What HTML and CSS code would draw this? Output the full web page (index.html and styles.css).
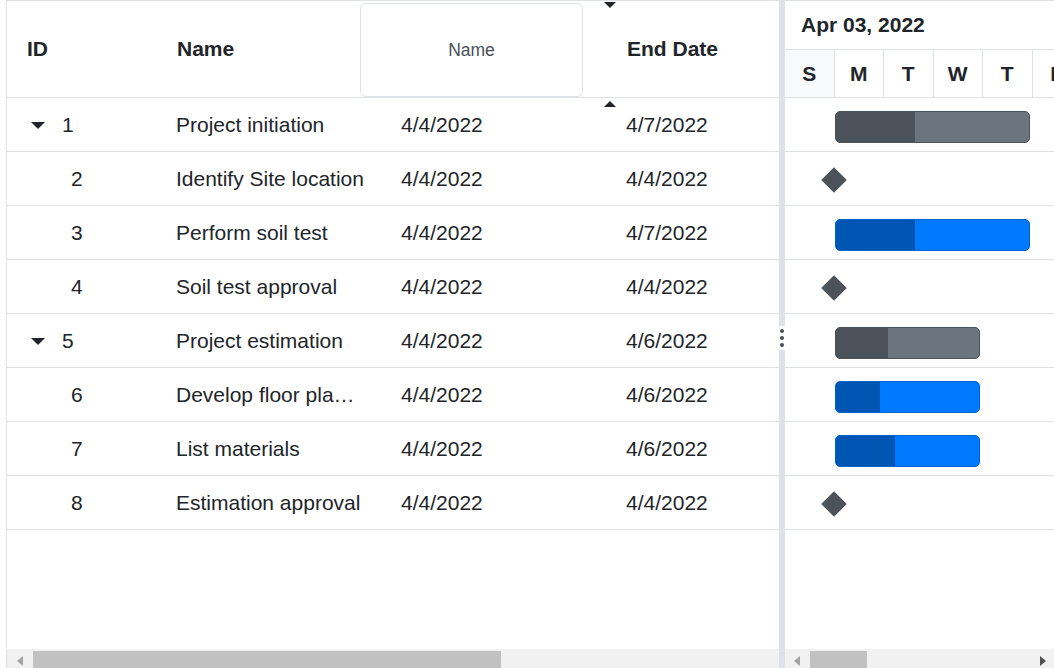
FILE: index.html
```html
<!DOCTYPE html>
<html lang="en">
<head>
<meta charset="utf-8">
<title>Gantt</title>
<link rel="stylesheet" href="styles.css">
</head>
<body>
<div class="gantt">
  <div class="grid-pane">
    <div class="grid-header">
      <div class="hcell c-id">ID</div>
      <div class="hcell c-name">Name</div>
      <div class="hcell c-start"></div>
      <div class="hcell c-end">End Date</div>
      <div class="drag-clone">Name</div>
      <span class="drop-arrow down"></span>
      <span class="drop-arrow up"></span>
    </div>
    <div class="grid-body">
      <div class="row"><div class="cell c-id"><span class="expander"></span>1</div><div class="cell c-name">Project initiation</div><div class="cell c-start">4/4/2022</div><div class="cell c-end">4/7/2022</div></div>
      <div class="row"><div class="cell c-id"><span class="indent"></span>2</div><div class="cell c-name">Identify Site location</div><div class="cell c-start">4/4/2022</div><div class="cell c-end">4/4/2022</div></div>
      <div class="row"><div class="cell c-id"><span class="indent"></span>3</div><div class="cell c-name">Perform soil test</div><div class="cell c-start">4/4/2022</div><div class="cell c-end">4/7/2022</div></div>
      <div class="row"><div class="cell c-id"><span class="indent"></span>4</div><div class="cell c-name">Soil test approval</div><div class="cell c-start">4/4/2022</div><div class="cell c-end">4/4/2022</div></div>
      <div class="row"><div class="cell c-id"><span class="expander"></span>5</div><div class="cell c-name">Project estimation</div><div class="cell c-start">4/4/2022</div><div class="cell c-end">4/6/2022</div></div>
      <div class="row"><div class="cell c-id"><span class="indent"></span>6</div><div class="cell c-name">Develop floor plan for estimation</div><div class="cell c-start">4/4/2022</div><div class="cell c-end">4/6/2022</div></div>
      <div class="row"><div class="cell c-id"><span class="indent"></span>7</div><div class="cell c-name">List materials</div><div class="cell c-start">4/4/2022</div><div class="cell c-end">4/6/2022</div></div>
      <div class="row"><div class="cell c-id"><span class="indent"></span>8</div><div class="cell c-name">Estimation approval</div><div class="cell c-start">4/4/2022</div><div class="cell c-end">4/4/2022</div></div>
      <div class="filler"></div>
    </div>
    <div class="hscroll left-scroll">
      <span class="sb-arrow sb-left"></span>
      <span class="sb-thumb"></span>
    </div>
  </div>
  <div class="splitter">
    <div class="handle"><i></i><i></i><i></i></div>
  </div>
  <div class="chart-pane">
    <div class="tl-top">Apr 03, 2022</div>
    <div class="tl-days">
      <div class="day weekend">S</div>
      <div class="day">M</div>
      <div class="day">T</div>
      <div class="day">W</div>
      <div class="day">T</div>
      <div class="day">F</div>
    </div>
    <div class="chart-body">
      <div class="crow bar-row"><div class="bar parent" style="width:195px"><div class="progress" style="width:79px"></div></div></div>
      <div class="crow ms-row"><div class="milestone"></div></div>
      <div class="crow bar-row"><div class="bar child" style="width:195px"><div class="progress" style="width:79px"></div></div></div>
      <div class="crow ms-row"><div class="milestone"></div></div>
      <div class="crow bar-row"><div class="bar parent" style="width:145px"><div class="progress" style="width:52px"></div></div></div>
      <div class="crow bar-row"><div class="bar child" style="width:145px"><div class="progress" style="width:44px"></div></div></div>
      <div class="crow bar-row"><div class="bar child" style="width:145px"><div class="progress" style="width:59px"></div></div></div>
      <div class="crow ms-row"><div class="milestone"></div></div>
      <div class="filler"></div>
    </div>
    <div class="hscroll right-scroll">
      <span class="sb-arrow sb-left"></span>
      <span class="sb-thumb"></span>
      <span class="sb-arrow sb-right"></span>
    </div>
  </div>
</div>
</body>
</html>
```

FILE: styles.css
```css
html, body {
  margin: 0;
  padding: 0;
  height: 668px;
  overflow: hidden;
  background: #fff;
}

body {
  font-family: "Liberation Sans", Arial, sans-serif;
  color: #212529;
  font-size: 21px;
}

.gantt {
  margin-left: 6px;
  width: 1048px;
  height: 675px;
  box-sizing: border-box;
  border-top: 1px solid #dee2e6;
  border-left: 1px solid #dee2e6;
  display: flex;
  overflow: hidden;
}

/* ---------- grid pane ---------- */
.grid-pane {
  width: 772px;
  flex: none;
  display: flex;
  flex-direction: column;
  position: relative;
  overflow: hidden;
}

.grid-header {
  height: 97px;
  box-sizing: border-box;
  border-bottom: 1px solid #dee2e6;
  display: flex;
  flex: none;
}

.hcell {
  display: flex;
  align-items: center;
  padding-left: 20px;
  box-sizing: border-box;
  font-weight: bold;
  flex: none;
  white-space: nowrap;
}

.c-id { width: 150px; }
.c-name { width: 225px; }
.c-start { width: 225px; }
.c-end { width: 225px; }

.drag-clone {
  position: absolute;
  left: 353px;
  top: 2px;
  width: 223px;
  height: 94px;
  box-sizing: border-box;
  border: 1px solid #dee2e6;
  border-radius: 6px;
  background: #fff;
  display: flex;
  align-items: center;
  justify-content: center;
  font-size: 17.5px;
  color: #495057;
}

.drop-arrow {
  position: absolute;
  left: 597px;
  width: 0;
  height: 0;
  border-left: 6px solid transparent;
  border-right: 6px solid transparent;
}

.drop-arrow.down {
  top: 1px;
  border-top: 6px solid #212529;
}

.drop-arrow.up {
  top: 100px;
  border-bottom: 6px solid #212529;
}

.grid-body {
  flex: 1;
  display: flex;
  flex-direction: column;
}

.row {
  height: 54px;
  box-sizing: border-box;
  border-bottom: 1px solid #dee2e6;
  display: flex;
  flex: none;
}

.cell {
  display: flex;
  align-items: center;
  padding-left: 19px;
  padding-right: 18px;
  box-sizing: border-box;
  flex: none;
  white-space: nowrap;
  overflow: hidden;
}

.cell.c-name {
  display: block;
  line-height: 53px;
  text-overflow: ellipsis;
}

.cell.c-id {
  padding-left: 24px;
}

.expander {
  width: 0;
  height: 0;
  border-left: 7px solid transparent;
  border-right: 7px solid transparent;
  border-top: 7px solid #212529;
  margin-right: 17px;
  margin-top: 2px;
}

.indent {
  width: 40px;
  flex: none;
}

.filler {
  flex: 1;
}

/* ---------- scrollbars ---------- */
.hscroll {
  height: 26px;
  flex: none;
  background: #f1f1f1;
  display: flex;
  align-items: flex-start;
}

.sb-arrow {
  width: 0;
  height: 0;
  margin-top: 7px;
  border-top: 5.5px solid transparent;
  border-bottom: 5.5px solid transparent;
  flex: none;
}

.sb-left {
  border-right: 6px solid #a3a3a3;
}

.sb-right {
  border-left: 6px solid #505050;
  margin-left: auto;
  margin-right: 8px;
}

.sb-thumb {
  height: 24px;
  margin-top: 2px;
  background: #c1c1c1;
  flex: none;
}

.left-scroll .sb-left { margin-left: 9.5px; }
.left-scroll .sb-thumb { margin-left: 10.5px; width: 468px; }

.right-scroll .sb-left { margin-left: 9px; }
.right-scroll .sb-thumb { margin-left: 10px; width: 57px; }

/* ---------- splitter ---------- */
.splitter {
  width: 6px;
  flex: none;
  background: #dee2e6;
  display: flex;
  flex-direction: column;
  justify-content: center;
}

.handle {
  height: 24px;
  background: #fff;
  display: flex;
  flex-direction: column;
  align-items: center;
  justify-content: center;
  gap: 3px;
}

.handle i {
  width: 4px;
  height: 4px;
  border-radius: 50%;
  background: #495057;
}

/* ---------- chart pane ---------- */
.chart-pane {
  flex: 1;
  min-width: 0;
  display: flex;
  flex-direction: column;
  overflow: hidden;
}

.tl-top {
  height: 49px;
  box-sizing: border-box;
  border-bottom: 1px solid #dee2e6;
  display: flex;
  align-items: center;
  padding-left: 16px;
  font-weight: bold;
  flex: none;
  white-space: nowrap;
}

.tl-days {
  height: 48px;
  box-sizing: border-box;
  border-bottom: 1px solid #dee2e6;
  display: flex;
  flex: none;
}

.day {
  width: 49.5px;
  flex: none;
  box-sizing: border-box;
  border-right: 1px solid #dee2e6;
  display: flex;
  align-items: center;
  justify-content: center;
  font-weight: bold;
}

.day.weekend {
  background: #f8f9fa;
}

.chart-body {
  flex: 1;
  display: flex;
  flex-direction: column;
}

.crow {
  height: 54px;
  box-sizing: border-box;
  border-bottom: 1px solid #dee2e6;
  display: flex;
  flex: none;
}

.bar-row {
  align-items: flex-start;
  padding-top: 13px;
}

.ms-row {
  align-items: center;
  padding-top: 2px;
}

.bar {
  margin-left: 50px;
  height: 32px;
  box-sizing: border-box;
  border-radius: 5px;
  overflow: hidden;
  display: flex;
}

.bar.parent {
  background: #6c757d;
  border: 1px solid #4b5259;
}

.bar.parent .progress {
  background: #4b5259;
}

.bar.child {
  background: #007bff;
  border: 1px solid #0062cc;
}

.bar.child .progress {
  background: #0056b3;
}

.progress {
  height: 100%;
}

.milestone {
  margin-left: 40px;
  width: 18px;
  height: 18px;
  background: #4b5259;
  transform: rotate(45deg);
}
```
